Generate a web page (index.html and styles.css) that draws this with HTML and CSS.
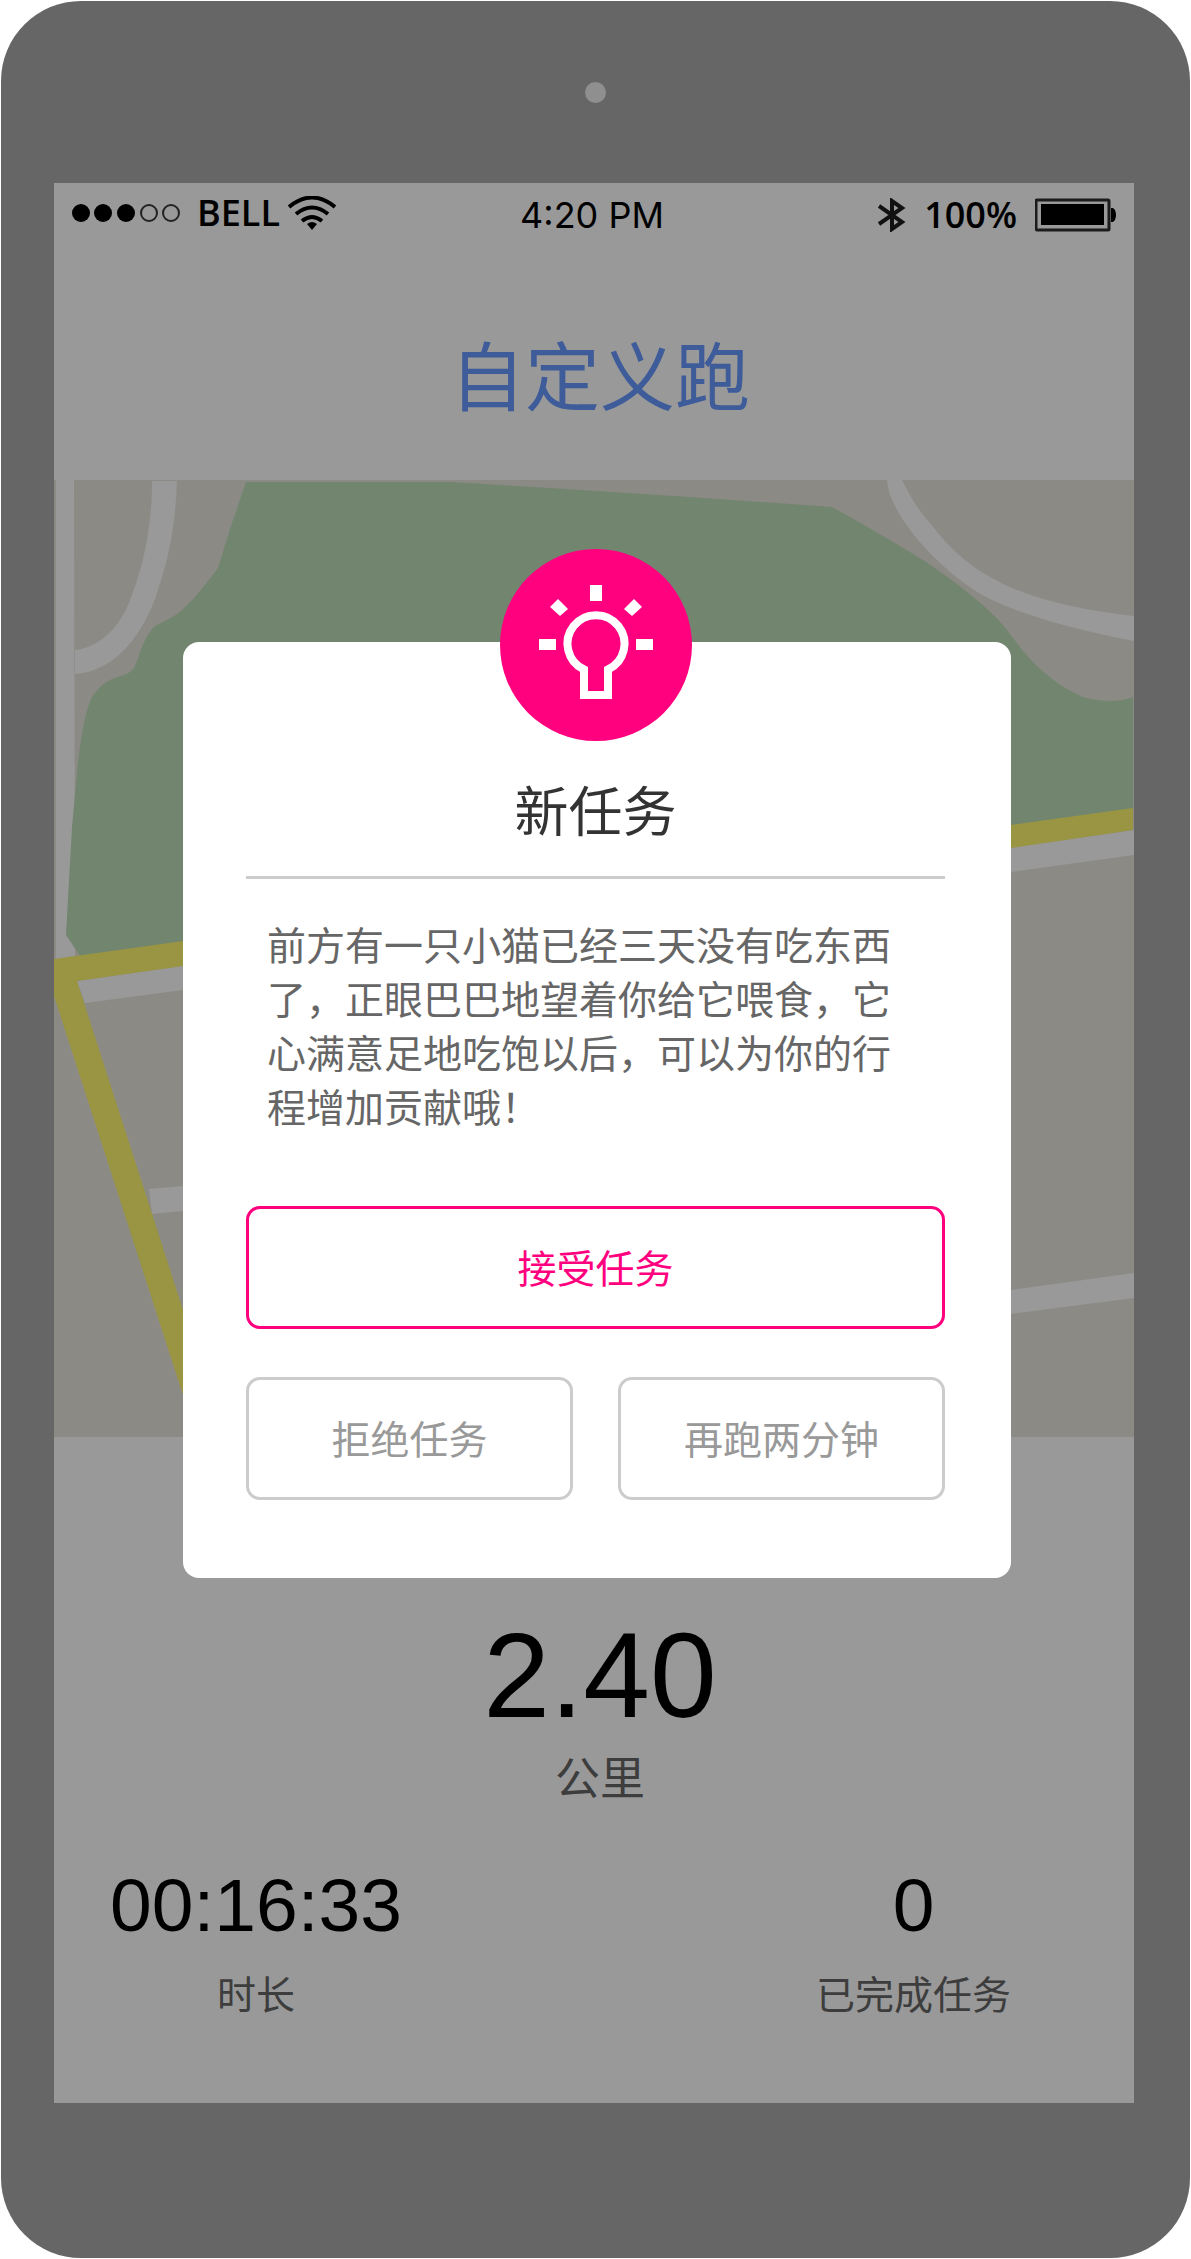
FILE: index.html
```html
<!DOCTYPE html>
<html lang="zh-CN">
<head>
<meta charset="utf-8">
<meta name="viewport" content="width=device-width, initial-scale=1">
<title>自定义跑</title>
<link rel="stylesheet" href="styles.css">
</head>
<body>
<div class="device">
  <div class="bezel"><span class="camera"></span></div>
  <div class="screen">
    <main class="app">
      <div class="status">
        <div class="status-left">
          <svg class="signal" width="109" height="18" viewBox="0 0 109 18" aria-hidden="true">
            <circle cx="9" cy="9" r="9"/><circle cx="31" cy="9" r="9"/><circle cx="54" cy="9" r="9"/>
            <g fill="none" stroke="#222" stroke-width="2"><circle cx="77" cy="9" r="8"/><circle cx="99" cy="9" r="8"/></g>
          </svg>
          <span class="carrier">BELL</span>
          <svg class="wifi" width="48" height="34" viewBox="0 0 48 34" aria-hidden="true">
            <g fill="none" stroke="#000" stroke-width="4">
              <path d="M1 11Q24 -8 47 11"/><path d="M8 18Q24 5 40 18"/><path d="M14 25Q24 17 34 25"/>
            </g>
            <path d="M19 28Q24 24 29 28L24 34Z"/>
          </svg>
        </div>
        <time class="clock">4:20 PM</time>
        <div class="status-right">
          <svg width="28" height="34" viewBox="0 0 28 34" aria-hidden="true">
            <path d="M1 8L24 24L14 31V3L24 10L1 26" fill="none" stroke="#111" stroke-width="4"/>
          </svg>
          <span class="level">100%</span>
          <svg width="81" height="34" viewBox="0 0 81 34" aria-hidden="true">
            <rect x="1" y="2" width="73" height="30" rx="1" fill="none" stroke="#1c1c1c" stroke-width="3"/>
            <rect x="6" y="6" width="63" height="21"/><path d="M76 10h2q3 2 3 7t-3 7h-2z"/>
          </svg>
        </div>
      </div>
      <h1 class="title">自定义跑</h1>
      <svg class="map" viewBox="0 0 1080 957" role="img" aria-label="地图">
        <rect width="1080" height="957" fill="#8c8a85"/>
        <path class="road" d="M2 0H20L21 480L2 482Z"/>
        <path class="road" d="M98 1H123C121 55 112 85 104 110C90 155 60 192 21 194V170C45 168 67 146 76 120C88 90 98 50 98 1Z"/>
        <path class="park" d="M192 2H396L496 8L636 17L778 27Q820 50 869 80Q923 116 949 145L969 171Q996 203 1029 217Q1058 225 1079 217V340L26 484V476L12 455L18 347L24 282C28 250 32 229 38 217Q46 205 56 200C66 195 74 196 80 188C86 176 88 160 99 148C106 142 120 138 129 129Q140 120 164 88L176 49Z"/>
        <path class="road" d="M833 0H848C858 20 866 32 876 43Q903 79 936 97Q986 126 1080 136V161Q986 143 936 119C895 99 836 40 833 0Z"/>
        <path class="road" d="M23 501L1080 350V375L957 392L129 510L31 523Z"/>
        <path class="road" d="M95 709L129 706L300 690V715L129 731L98 734Z"/>
        <path class="road" d="M800 832L957 810L1080 793V818L957 834L800 856Z"/>
        <path class="highway" d="M0 479L129 461L957 345L1079 328V350L957 368L129 486L23 501L129 830L170 957H142L129 915L0 516Z"/>
      </svg>
      <section class="stats">
        <div class="stat stat-main"><span class="distance">2.40</span><span class="unit">公里</span></div>
        <div class="stat-row">
          <div class="stat"><span class="value">00:16:33</span><span class="label">时长</span></div>
          <div class="stat"><span class="value">0</span><span class="label">已完成任务</span></div>
        </div>
      </section>
    </main>
    <div class="layer">
      <section class="dialog" role="dialog" aria-labelledby="dialog-title">
        <svg class="badge" width="192" height="192" viewBox="0 0 192 192" aria-hidden="true">
          <circle cx="96" cy="96" r="96" fill="#ff007f"/>
          <path d="M84 120.500A28.500 28.500 0 1 1 108 120.500V146H84Z" fill="none" stroke="#fff" stroke-width="8"/>
          <g fill="#fff">
            <rect x="90" y="36" width="12" height="16"/>
            <rect x="39" y="90" width="17" height="11"/><rect x="136" y="90" width="17" height="11"/>
            <path d="M50 58L58 50L68 60L60 67Z"/><path d="M142 58L134 50L124 60L132 67Z"/>
          </g>
        </svg>
        <h2 class="dialog-title" id="dialog-title">新任务</h2>
        <p class="message">前方有一只小猫已经三天没有吃东西了，正眼巴巴地望着你给它喂食，它心满意足地吃饱以后，可以为你的行程增加贡献哦！</p>
        <div class="actions">
          <button class="btn btn-primary" type="button">接受任务</button>
          <button class="btn" type="button">拒绝任务</button>
          <button class="btn" type="button">再跑两分钟</button>
        </div>
      </section>
    </div>
  </div>
</div>
</body>
</html>
```
FILE: styles.css
```css
* { box-sizing: border-box; }
body {
  margin: 0;
  padding: 1px;
  background: #fff;
  color: #000;
  font-family: "Liberation Sans", "Noto Sans CJK SC", sans-serif;
}
.device {
  padding: 0 56px 155px 53px;
  border-radius: 80px;
  background: #666;
}
.bezel {
  display: flex;
  align-items: center;
  justify-content: center;
  height: 182px;
  padding-left: 3px;
}
.camera {
  width: 21px;
  height: 21px;
  border-radius: 50%;
  background: #8f8f8f;
}
.screen { display: grid; background: #999; }
.app, .layer { grid-area: 1 / 1; min-width: 0; }

.status {
  display: grid;
  grid-template-columns: 1fr auto 1fr;
  align-items: center;
  height: 62px;
  padding: 0 18px;
  font-size: 36px;
  line-height: 48px;
}
.status-left, .status-right { display: flex; align-items: center; }
.status-left { gap: 16px; padding-bottom: 2px; }
.status-right { justify-content: flex-end; gap: 18px; padding-top: 2px; }
.carrier, .level { font-family: "Open Sans", sans-serif; font-weight: 600; }
.carrier { margin-right: -8px; }
.clock { padding: 2px 4px 0 0; font-family: Inter, sans-serif; }

.title {
  margin: 0;
  height: 235px;
  padding: 76px 0 0 12px;
  color: #3d5c99;
  font-size: 75px;
  font-weight: 400;
  line-height: 116px;
  text-align: center;
}
.map { display: block; width: 100%; height: auto; }
.road { fill: #999; }
.park { fill: #72856f; }
.highway { fill: #999543; }

.stats { padding: 178px 0 80px; }
.stat { display: flex; flex-direction: column; align-items: center; }
.stat-main { padding-left: 12px; }
.distance { font-size: 120px; line-height: 120px; }
.unit { margin-top: 15px; color: #3d3d3d; font-size: 45px; line-height: 60px; }
.stat-row {
  display: flex;
  justify-content: space-between;
  padding: 55px 123px 0 56px;
}
.value { font-size: 75px; line-height: 80px; }
.label { margin-top: 24px; color: #3d3d3d; font-size: 39px; line-height: 54px; }

.layer { padding: 459px 123px 0 129px; }
.dialog {
  display: flow-root;
  padding: 0 66px 78px 63px;
  border-radius: 16px;
  background: #fff;
}
.badge { display: block; margin: -93px auto 0; }
.dialog-title {
  margin: 36px 0 0;
  padding-bottom: 27px;
  border-bottom: 3px solid #ccc;
  color: #333;
  font-size: 54px;
  font-weight: 400;
  line-height: 72px;
  text-align: center;
}
.message {
  margin: 41px 0 70px;
  padding: 0 48px 0 21px;
  color: #666;
  font-size: 39px;
  line-height: 54px;
}
.actions {
  display: grid;
  grid-template-columns: 1fr 1fr;
  gap: 48px 45px;
}
.btn {
  height: 123px;
  padding: 0 0 4px;
  border: 3px solid #ccc;
  border-radius: 14px;
  background: #fff;
  color: #999;
  font-family: inherit;
  font-size: 39px;
}
.btn-primary { grid-column: 1 / -1; border-color: #ff007f; color: #ff007f; }
```
